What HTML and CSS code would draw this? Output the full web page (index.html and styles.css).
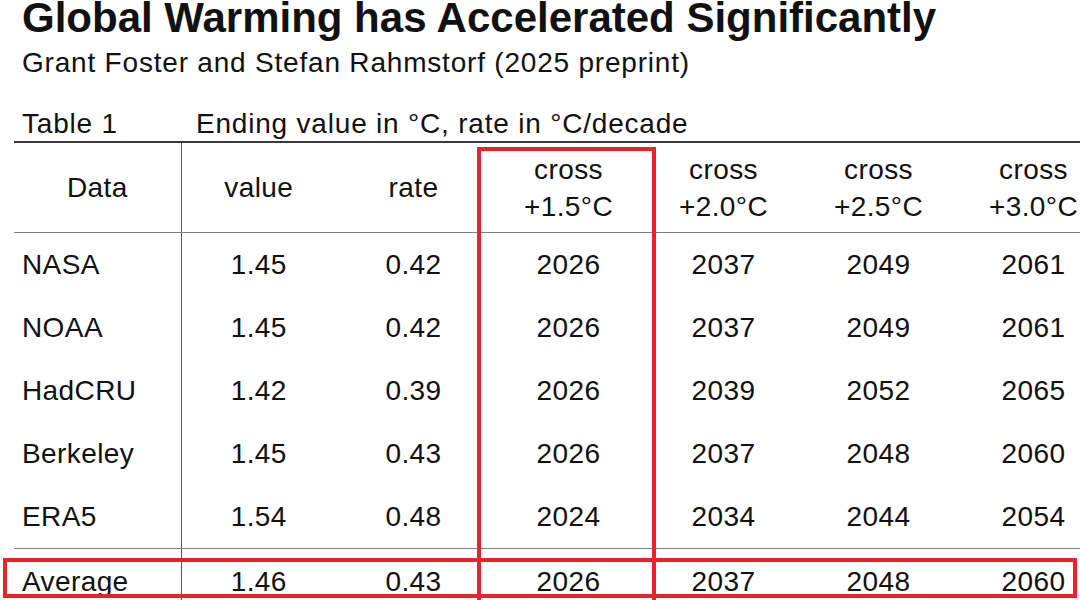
FILE: index.html
```html
<!DOCTYPE html>
<html lang="en">
<head>
<meta charset="utf-8">
<title>Global Warming has Accelerated Significantly</title>
<link rel="stylesheet" href="styles.css">
</head>
<body>
<div class="page">
  <h1 class="title">Global Warming has Accelerated Significantly</h1>
  <p class="subtitle">Grant Foster and Stefan Rahmstorf (2025 preprint)</p>
  <div class="caption">
    <span class="caption-label">Table 1</span>
    <span class="caption-text">Ending value in °C, rate in °C/decade</span>
  </div>
  <div class="table-wrap">
    <table class="data">
      <colgroup>
        <col class="c-name">
        <col class="c-num"><col class="c-num"><col class="c-num">
        <col class="c-num"><col class="c-num"><col class="c-num">
      </colgroup>
      <thead>
        <tr>
          <th class="name">Data</th>
          <th>value</th>
          <th>rate</th>
          <th>cross<br>+1.5°C</th>
          <th>cross<br>+2.0°C</th>
          <th>cross<br>+2.5°C</th>
          <th>cross<br>+3.0°C</th>
        </tr>
      </thead>
      <tbody>
        <tr><td class="name">NASA</td><td>1.45</td><td>0.42</td><td>2026</td><td>2037</td><td>2049</td><td>2061</td></tr>
        <tr><td class="name">NOAA</td><td>1.45</td><td>0.42</td><td>2026</td><td>2037</td><td>2049</td><td>2061</td></tr>
        <tr><td class="name">HadCRU</td><td>1.42</td><td>0.39</td><td>2026</td><td>2039</td><td>2052</td><td>2065</td></tr>
        <tr><td class="name">Berkeley</td><td>1.45</td><td>0.43</td><td>2026</td><td>2037</td><td>2048</td><td>2060</td></tr>
        <tr class="last"><td class="name">ERA5</td><td>1.54</td><td>0.48</td><td>2024</td><td>2034</td><td>2044</td><td>2054</td></tr>
        <tr class="avg"><td class="name">Average</td><td>1.46</td><td>0.43</td><td>2026</td><td>2037</td><td>2048</td><td>2060</td></tr>
      </tbody>
    </table>
    <div class="hl hl-col"></div>
    <div class="hl hl-row"></div>
  </div>
</div>
</body>
</html>
```
FILE: styles.css
```css
html, body {
  margin: 0;
  padding: 0;
  overflow: hidden;
  background: #ffffff;
}
body {
  width: 1080px;
  height: 600px;
  font-family: "Liberation Sans", Arial, sans-serif;
  color: #111111;
}
.page {
  width: 1080px;
}
.title {
  margin: 0;
  padding-left: 22px;
  font-size: 42px;
  line-height: 35px;
  font-weight: bold;
  white-space: nowrap;
}
.subtitle {
  margin: 12px 0 0;
  padding-left: 22px;
  font-size: 28px;
  line-height: 32px;
  letter-spacing: 0.8px;
  white-space: nowrap;
}
.caption {
  display: flex;
  margin-top: 29px;
  padding-left: 22px;
  font-size: 28px;
  line-height: 32px;
  letter-spacing: 0.8px;
  white-space: nowrap;
}
.caption-label {
  width: 174px;
}
.table-wrap {
  position: relative;
  margin-top: 1px;
  height: 470px;
}
.data {
  margin-left: 14px;
  width: 1097px;
  table-layout: fixed;
  border-collapse: collapse;
  border-top: 2px solid #3a3a3a;
  font-size: 28px;
  letter-spacing: 0.4px;
}
.c-name { width: 167px; }
.c-num { width: 155px; }
.data th, .data td {
  padding: 0;
  text-align: center;
  font-weight: normal;
  white-space: nowrap;
}
.data th {
  height: 89px;
  line-height: 37px;
  border-bottom: 1.5px solid #808080;
}
.data td {
  height: 63px;
  line-height: 30px;
}
.data .name {
  border-right: 1.5px solid #555555;
}
.data td.name {
  text-align: left;
  padding-left: 8px;
}
.data tr.last td {
  border-bottom: 1.5px solid #808080;
}
.data tr.avg td {
  height: 66px;
}
.hl {
  position: absolute;
  box-sizing: border-box;
  border: 4px solid #e8232d;
}
.hl-col {
  left: 477px;
  top: 6px;
  width: 179px;
  height: 500px;
}
.hl-row {
  left: 3px;
  top: 417px;
  width: 1074px;
  height: 40px;
}
```
